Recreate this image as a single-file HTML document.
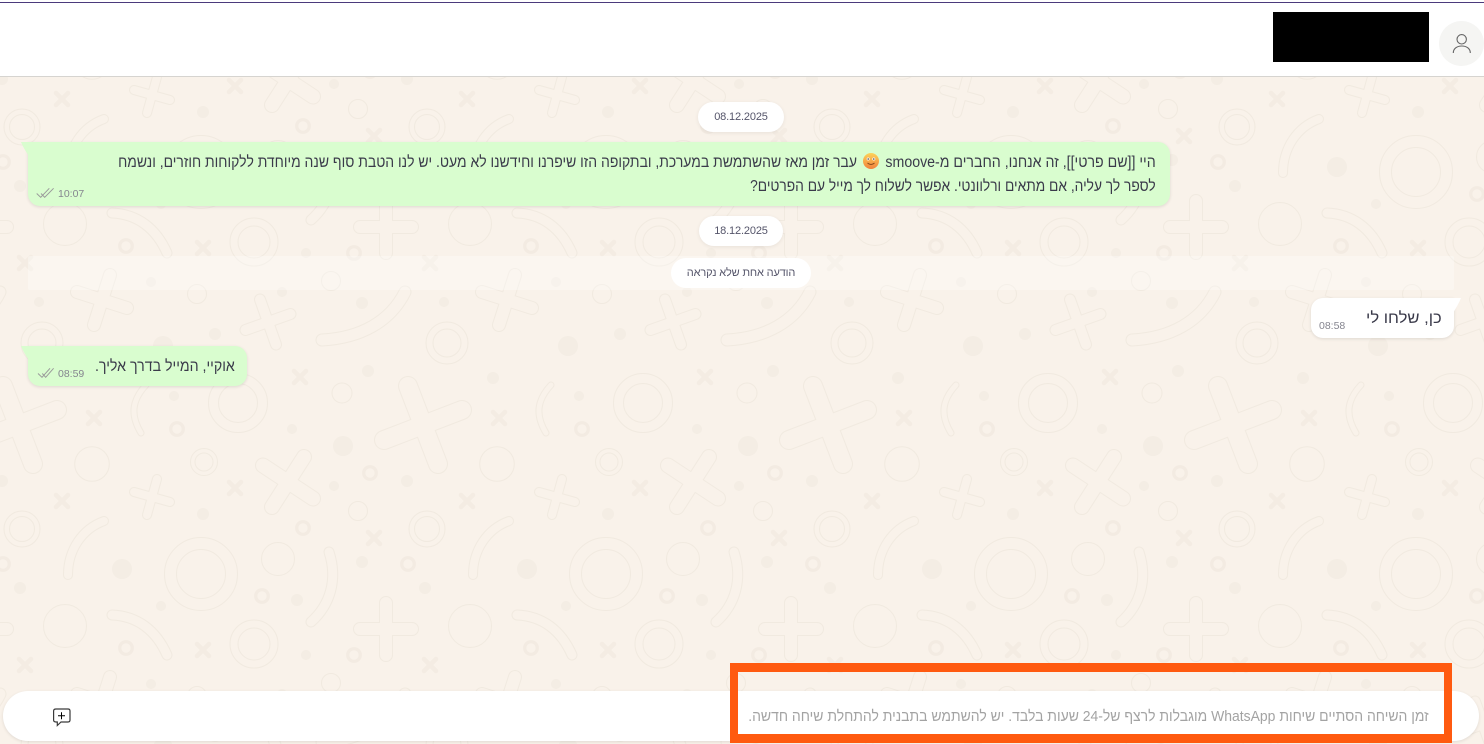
<!DOCTYPE html>
<html lang="he">
<head>
<meta charset="utf-8">
<title>Chat</title>
<style>
html,body{margin:0;padding:0;width:1484px;height:744px;overflow:hidden;background:#f9f2ea;font-family:"Liberation Sans","DejaVu Sans",sans-serif}
.a{position:absolute}
.t{position:absolute;white-space:nowrap;direction:rtl;color:#3a3a4a;font-size:15.5px;line-height:24px;transform-origin:right center}
.pill{position:absolute;background:#fff;border-radius:15px;box-shadow:0 1px 4px rgba(0,0,0,.07);text-align:center;color:#55556a;font-size:11px;line-height:31px;height:30px;letter-spacing:-.15px}
.b{position:absolute;box-shadow:0 1px 3px rgba(0,0,0,.11)}
.time{position:absolute;font-size:10.5px;line-height:12px;color:#85858f;white-space:nowrap}
svg{position:absolute;left:0;top:0}
.o{fill:none;stroke:#f1eae0;stroke-linecap:round}
.i{fill:none;stroke:#f9f2ea;stroke-linecap:round}
.c{fill:none;stroke:#f1eae0;stroke-width:1}
.d{fill:#f4ede4}
.r{fill:none;stroke:#f3ebe2;stroke-width:3.2}
.x{fill:none;stroke:#f4ece3;stroke-width:4.5;stroke-linecap:round}
</style>
</head>
<body>
<svg width="1484" height="744" viewBox="0 0 1484 744">
<defs>
<g id="tile">
<path class="o" stroke-width="20" d="M-21 440L57 410M3 386L33 464"/><path class="i" stroke-width="18" d="M-21 440L57 410M3 386L33 464"/>
<path class="o" stroke-width="16" d="M263 465.5L313 498.5M272 507L304 457"/><path class="i" stroke-width="14" d="M263 465.5L313 498.5M272 507L304 457"/>
<path class="o" stroke-width="10" d="M134 492L170 502M147 515L157 479"/><path class="i" stroke-width="8" d="M134 492L170 502M147 515L157 479"/>
<path class="o" stroke-width="14" d="M360 629L412 629M386 603L386 655"/><path class="i" stroke-width="12" d="M360 629L412 629M386 603L386 655"/>
<path class="o" stroke-width="14" d="M77 292L127 308M94 325L110 275"/><path class="i" stroke-width="12" d="M77 292L127 308M94 325L110 275"/>
<path class="o" stroke-width="12" d="M245.5 330L290.5 314M260 299.5L276 344.5"/><path class="i" stroke-width="10" d="M245.5 330L290.5 314M260 299.5L276 344.5"/>
<path class="o" stroke-width="10" d="M104 521C82 529 68 550 68 575"/><path class="i" stroke-width="8" d="M104 521C82 529 68 550 68 575"/>
<path class="o" stroke-width="7" d="M141 433C130 415 132 400 146 385"/><path class="i" stroke-width="5" d="M141 433C130 415 132 400 146 385"/>
<path class="o" stroke-width="11" d="M329 552C338 580 330 605 311 622"/><path class="i" stroke-width="9" d="M329 552C338 580 330 605 311 622"/>
<path class="o" stroke-width="11" d="M112 615C137 616 156 630 167 655"/><path class="i" stroke-width="9" d="M112 615C137 616 156 630 167 655"/>
<path class="o" stroke-width="13" d="M405 292C390 322 360 338 322 340"/><path class="i" stroke-width="11" d="M405 292C390 322 360 338 322 340"/>
<circle class="c" cx="92" cy="464" r="17.3"/><circle class="c" cx="358" cy="511" r="9.5"/><circle class="c" cx="342" cy="393" r="10"/><circle class="c" cx="278" cy="559" r="16.5"/><circle class="c" cx="65" cy="626" r="21.5"/><circle class="c" cx="197" cy="294" r="9.5"/><circle class="c" cx="331" cy="281" r="9.5"/>
<circle class="c" cx="22" cy="529" r="18"/><circle class="c" cx="22" cy="529" r="12.5"/>
<circle class="c" cx="204" cy="462" r="13.5"/><circle class="c" cx="204" cy="462" r="9"/>
<circle class="c" cx="201" cy="574" r="36.5"/><circle class="c" cx="201" cy="574" r="24.5"/>
<circle class="c" cx="238" cy="403" r="29.5"/><circle class="c" cx="238" cy="403" r="19.5"/>
<circle class="c" cx="254" cy="644" r="24"/><circle class="c" cx="254" cy="644" r="16"/>
<circle class="c" cx="42" cy="343" r="21"/><circle class="c" cx="42" cy="343" r="14"/>
<circle class="r" cx="177" cy="429" r="6.3"/><circle class="r" cx="303" cy="528" r="6.3"/><circle class="r" cx="370" cy="473" r="6.3"/><circle class="r" cx="3" cy="564" r="6.3"/><circle class="r" cx="262" cy="596" r="6.3"/><circle class="r" cx="126" cy="648" r="6.3"/><circle class="r" cx="354" cy="253" r="6.3"/>
<circle class="d" cx="174" cy="396" r="5"/><circle class="d" cx="292" cy="429" r="5"/><circle class="d" cx="343" cy="446" r="10"/><circle class="d" cx="2" cy="481" r="6"/><circle class="d" cx="334" cy="486" r="5"/><circle class="d" cx="203" cy="514" r="6"/><circle class="d" cx="122" cy="569" r="10"/><circle class="d" cx="20" cy="588" r="6"/><circle class="d" cx="362" cy="562" r="6"/><circle class="d" cx="297" cy="600" r="6"/><circle class="d" cx="161" cy="606" r="5"/><circle class="d" cx="306" cy="253" r="5"/><circle class="d" cx="151" cy="282" r="5"/><circle class="d" cx="39" cy="302" r="5"/><circle class="d" cx="282" cy="292" r="5"/><circle class="d" cx="362" cy="303" r="6"/><circle class="d" cx="215" cy="334" r="6"/><circle class="d" cx="163" cy="346" r="10"/><circle class="d" cx="368" cy="371" r="6"/><circle class="d" cx="88" cy="378" r="6"/>
<path class="x" d="M88 412L100 424M100 412L88 424M56 495L68 507M68 495L56 507M229 482L241 494M241 482L229 494M368 532L380 544M380 532L368 544M19 257L31 269M31 257L19 269M294 371L306 383M306 371L294 383M197 242L209 254M209 242L197 254"/>
</g>
<pattern id="p" patternUnits="userSpaceOnUse" x="0" y="0" width="405" height="402">
<rect width="405" height="402" fill="#f9f2ea"/>
<use href="#tile" x="-405" y="-402"/><use href="#tile" x="0" y="-402"/><use href="#tile" x="405" y="-402"/>
<use href="#tile" x="-405" y="0"/><use href="#tile" x="0" y="0"/><use href="#tile" x="405" y="0"/>
</pattern>
<linearGradient id="e" x1="0" y1="0" x2="0" y2="1"><stop offset="0" stop-color="#fdd35a"/><stop offset="1" stop-color="#f2823c"/></linearGradient>
</defs>
<rect x="0" y="0" width="1484" height="744" fill="url(#p)"/>
</svg>

<!-- header -->
<div class="a" style="left:0;top:0;width:1484px;height:76px;background:#fff;border-bottom:1px solid #d6d4d0"></div>
<div class="a" style="left:0;top:2px;width:1484px;height:1px;background:#4b3a7c"></div>
<div class="a" style="left:1273px;top:12px;width:156px;height:50px;background:#000"></div>
<div class="a" style="left:1439px;top:21px;width:45px;height:45px;border-radius:50%;background:#f5f5f3"></div>

<!-- unread strip -->
<div class="a" style="left:28px;top:256px;width:1426px;height:34px;background:rgba(255,255,255,.3);border-radius:2px"></div>

<!-- date pills -->
<div class="pill" style="left:698px;top:102px;width:86px">08.12.2025</div>
<div class="pill" style="left:699px;top:216px;width:84px">18.12.2025</div>
<div class="pill" style="left:671px;top:258px;width:140px;box-shadow:none">הודעה אחת שלא נקראה</div>

<!-- bubbles -->
<div class="b" style="left:28px;top:142px;width:1142px;height:64px;background:#d9fdcf;border-radius:0 12px 12px 12px"></div>
<div class="b" style="left:28px;top:346px;width:219px;height:40px;background:#d9fdcf;border-radius:0 12px 12px 12px"></div>
<div class="b" style="left:1311px;top:298px;width:143px;height:40px;background:#fff;border-radius:12px 0 12px 12px"></div>

<svg width="1484" height="744" viewBox="0 0 1484 744">
<path d="M21 142H29V156C26 152 23 147 21 142Z" fill="#d9fdcf"/>
<path d="M21 346H29V360C26 356 23 351 21 346Z" fill="#d9fdcf"/>
<path d="M1461 298H1453V313C1456 308 1459 303 1461 298Z" fill="#fff"/>
<!-- avatar -->
<circle cx="1461.7" cy="39.3" r="4.7" fill="none" stroke="#666" stroke-width="1.1"/>
<path d="M1453.3 53C1453.3 48.5 1457 46 1461.8 46S1470.3 48.5 1470.3 53" fill="none" stroke="#666" stroke-width="1.1"/>
<!-- ticks -->
<path d="M36.7 193.5L40.7 197.3L49.3 188.3M41 193.5L44.7 197.3L53.6 188.3" fill="none" stroke="#9a9a9a" stroke-width="1"/>
<path d="M38 373.5L42 377.3L50 368.3M42.3 373.5L45.7 377.3L53.6 368.3" fill="none" stroke="#9a9a9a" stroke-width="1"/>
<!-- emoji -->
<circle cx="871" cy="161" r="8" fill="url(#e)"/>
<circle cx="868.2" cy="159" r="1.5" fill="#fff"/><circle cx="873.8" cy="159" r="1.5" fill="#fff"/>
<circle cx="868.2" cy="159" r=".8" fill="#444"/><circle cx="873.8" cy="159" r=".8" fill="#444"/>
<path d="M867.5 163Q871 166 874.5 163" fill="none" stroke="#8a4a1c" stroke-width="1"/>
</svg>

<div class="t" style="right:328px;top:151px;transform:scaleX(.914)">היי [[שם פרטי]], זה אנחנו, החברים מ-smoove</div>
<div class="t" style="right:627px;top:151px;transform:scaleX(.9)">עבר זמן מאז שהשתמשת במערכת, ובתקופה הזו שיפרנו וחידשנו לא מעט. יש לנו הטבת סוף שנה מיוחדת ללקוחות חוזרים, ונשמח</div>
<div class="t" style="right:328px;top:175px;transform:scaleX(.888)">לספר לך עליה, אם מתאים ורלוונטי. אפשר לשלוח לך מייל עם הפרטים?</div>
<div class="time" style="left:58px;top:188px">10:07</div>

<div class="t" style="right:42px;top:307px;transform:scaleX(1.07)">כן, שלחו לי</div>
<div class="time" style="left:1319px;top:320px">08:58</div>

<div class="t" style="right:1249px;top:355px;transform:scaleX(.915)">אוקיי, המייל בדרך אליך.</div>
<div class="time" style="left:58px;top:368px">08:59</div>

<!-- input bar -->
<div class="a" style="left:3px;top:691px;width:1476px;height:50px;background:#fff;border-radius:25px;box-shadow:0 1px 3px rgba(0,0,0,.1)"></div>
<svg width="1484" height="744" viewBox="0 0 1484 744">
<path d="M53.6 711Q53.6 709 56 709H68Q70 709 70 711V720Q70 722 68 722H61L57.3 725.5V722H56Q53.6 722 53.6 720Z" fill="#fff" stroke="#3a3a3a" stroke-width="1.2"/>
<path d="M61.5 712.3V719.3M58 715.8H65" stroke="#000" stroke-width="1" fill="none"/>
</svg>
<div class="t" style="right:55px;top:705px;color:#a3a3a3;font-size:15px;transform:scaleX(.93)">זמן השיחה הסתיים שיחות WhatsApp מוגבלות לרצף של-24 שעות בלבד. יש להשתמש בתבנית להתחלת שיחה חדשה.</div>

<!-- orange highlight -->
<div class="a" style="left:730px;top:663px;width:706px;height:62px;border:8px solid #ff5a10;border-top-width:9px;border-bottom-width:9px"></div>
</body>
</html>
